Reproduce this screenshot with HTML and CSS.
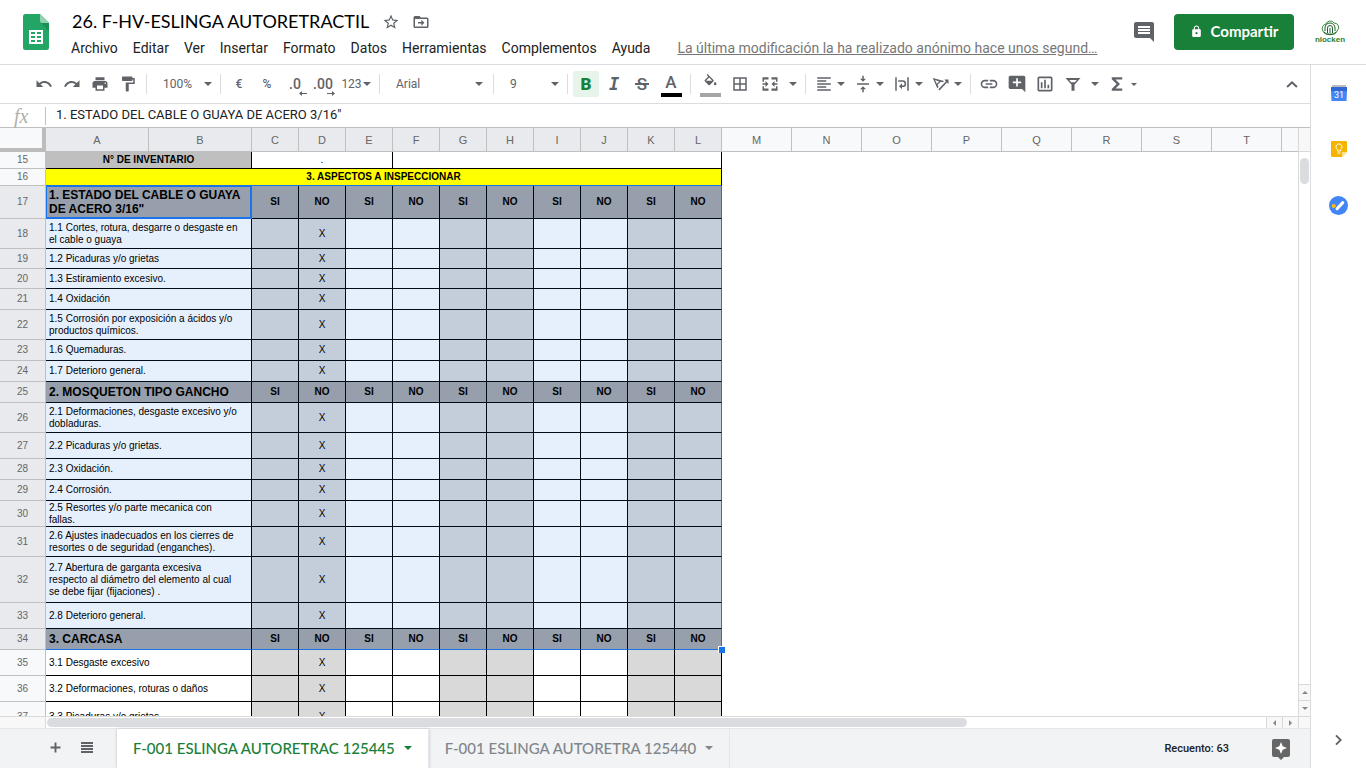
FILE: index.html
```html
<!DOCTYPE html>
<html lang="es">
<head>
<meta charset="utf-8">
<title>26. F-HV-ESLINGA AUTORETRACTIL</title>
<link rel="stylesheet" href="styles.css">
</head>
<body>
<header class="top">
  <svg class="logo" viewBox="0 0 26 36" aria-hidden="true">
    <path fill="#23a566" d="M2 0h15l9 9v24.500a2.500 2.500 0 0 1-2.500 2.500h-21A2.500 2.500 0 0 1 0 33.500v-31A2.500 2.500 0 0 1 2 0z"/>
    <path fill="#1c8f55" d="M18 9h8v8z"/>
    <path fill="#8ed1b1" d="M17 0l9 9h-7a2 2 0 0 1-2-2z"/>
    <path fill="#fff" fill-rule="evenodd" d="M6 16h14v14H6zM8 18v2h4v-2zM14 18v2h4v-2zM8 22v2h4v-2zM14 22v2h4v-2zM8 26v2h4v-2zM14 26v2h4v-2z"/>
  </svg>
  <div class="heading">
    <div class="title-row">
      <input class="title" type="text" aria-label="Nombre del documento" value="26. F-HV-ESLINGA AUTORETRACTIL">
      <button class="mini" aria-label="Destacar"><svg viewBox="0 0 24 24"><path d="M22 9.240l-7.190-.62L12 2 9.190 8.630 2 9.240l5.460 4.730L5.820 21 12 17.270 18.180 21l-1.630-7.030L22 9.240zM12 15.400l-3.760 2.270 1-4.280-3.320-2.880 4.380-.38L12 6.100l1.710 4.040 4.380.38-3.320 2.880 1 4.280L12 15.400z"/></svg></button>
      <button class="mini" aria-label="Mover"><svg viewBox="0 0 24 24"><path d="M20 6h-8l-2-2H4a2 2 0 0 0-2 2v12a2 2 0 0 0 2 2h16a2 2 0 0 0 2-2V8a2 2 0 0 0-2-2zm0 12H4V8h16zM12.500 17l4-4-4-4v3H8v2h4.500z"/></svg></button>
    </div>
    <nav class="menu">
      <button>Archivo</button><button>Editar</button><button>Ver</button><button>Insertar</button><button>Formato</button><button>Datos</button><button>Herramientas</button><button>Complementos</button><button>Ayuda</button>
      <a class="last-edit" href="#">La última modificación la ha realizado anónimo hace unos segund…</a>
    </nav>
  </div>
  <div class="account">
    <button class="comments" aria-label="Comentarios"><svg viewBox="0 0 24 24"><path d="M22 4c0-1.100-.9-2-2-2H4c-1.100 0-2 .9-2 2v12c0 1.100.9 2 2 2h14l4 4zM18 14H6v-2h12v2zm0-3H6V9h12v2zm0-3H6V6h12v2z"/></svg></button>
    <button class="share"><svg viewBox="0 0 24 24" aria-hidden="true"><path d="M18 8h-1V6c0-2.760-2.240-5-5-5S7 3.240 7 6v2H6c-1.100 0-2 .9-2 2v10c0 1.100.9 2 2 2h12c1.100 0 2-.9 2-2V10c0-1.100-.9-2-2-2zm-6 9a2 2 0 1 1 0-4 2 2 0 0 1 0 4zm3.100-9H8.900V6a3.100 3.100 0 0 1 6.200 0z"/></svg>Compartir</button>
    <svg class="avatar" viewBox="0 0 32 32" role="img" aria-label="Cuenta">
      <g fill="none" stroke="#3c8a3c" stroke-width="1">
        <path d="M12 8a4.500 4.500 0 0 1 8-1 4.500 4.500 0 0 1 3 8 4 4 0 0 1-5 3h-4a4 4 0 0 1-5-3 4.500 4.500 0 0 1 3-7z"/>
        <path stroke="#1f5f2c" d="M13.500 17v-5a2.500 2.500 0 0 1 5 0v5M16 12v5M11 15v-3a5 5 0 0 1 10 0v3M10 16a8 8 0 0 0 12 0"/>
      </g>
      <text x="16" y="26" text-anchor="middle" class="avatar-name">nlocken</text>
    </svg>
  </div>
</header>
<div class="body">
<main class="editor">
  <div class="toolbar">
    <button class="tb" aria-label="Deshacer"><svg viewBox="0 0 24 24"><path d="M12.500 8c-2.650 0-5.050.99-6.900 2.600L2 7v9h9l-3.620-3.620c1.390-1.160 3.160-1.880 5.120-1.880 3.540 0 6.550 2.310 7.600 5.500l2.370-.78C21.080 11.030 17.150 8 12.500 8z"/></svg></button>
    <button class="tb" aria-label="Rehacer"><svg viewBox="0 0 24 24"><path d="M18.400 10.600C16.550 8.990 14.150 8 11.500 8c-4.650 0-8.580 3.030-9.960 7.220L3.900 16c1.050-3.190 4.050-5.500 7.600-5.500 1.950 0 3.730.72 5.120 1.880L13 16h9V7z"/></svg></button>
    <button class="tb" aria-label="Imprimir"><svg viewBox="0 0 24 24"><path d="M19 8H5c-1.660 0-3 1.340-3 3v6h4v4h12v-4h4v-6c0-1.660-1.340-3-3-3zm-3 11H8v-5h8v5zm3-7a1 1 0 1 1 0-2 1 1 0 0 1 0 2zM18 3H6v4h12V3z"/></svg></button>
    <button class="tb" aria-label="Copiar formato"><svg viewBox="0 0 24 24"><path d="M18 4V3c0-.55-.45-1-1-1H5c-.55 0-1 .45-1 1v4c0 .55.45 1 1 1h12c.55 0 1-.45 1-1V6h1v4H9v11c0 .55.45 1 1 1h2c.55 0 1-.45 1-1v-9h8V4z"/></svg></button>
    <span class="sep"></span>
    <label class="pick pick-s"><select aria-label="Zoom"><option>100%</option></select><i class="caret"></i></label>
    <span class="sep"></span>
    <button class="tb num">€</button><button class="tb num">%</button>
    <button class="tb dec">.0<svg viewBox="0 0 8 5" aria-hidden="true"><path d="M0 2.500L3 0v2h5v1H3v2z"/></svg></button>
    <button class="tb dec">.00<svg viewBox="0 0 8 5" aria-hidden="true"><path d="M8 2.500L5 0v2H0v1h5v2z"/></svg></button>
    <button class="tb fmt">123<i class="caret"></i></button>
    <span class="sep"></span>
    <label class="pick pick-l"><select aria-label="Fuente"><option>Arial</option></select><i class="caret"></i></label>
    <span class="sep"></span>
    <label class="pick pick-s"><select aria-label="Tamaño de fuente"><option>9</option></select><i class="caret"></i></label>
    <span class="sep"></span>
    <button class="tb bold on">B</button>
    <button class="tb italic">I</button>
    <button class="tb strike">S</button>
    <button class="tb wide color"><span>A</span></button>
    <span class="sep"></span>
    <button class="tb wide fill" aria-label="Color de relleno"><svg viewBox="0 0 24 24"><path d="M16.560 8.940L7.620 0 6.210 1.410l2.380 2.380-5.150 5.150c-.59.59-.59 1.540 0 2.120l5.500 5.500c.29.29.68.44 1.060.44s.77-.15 1.060-.44l5.500-5.500c.59-.58.59-1.530 0-2.120zM5.210 10L10 5.210 14.790 10zM19 11.500s-2 2.170-2 3.500a2 2 0 0 0 4 0c0-1.330-2-3.500-2-3.500z"/></svg></button>
    <button class="tb wide" aria-label="Bordes"><svg viewBox="0 0 24 24"><path d="M3 3v18h18V3H3zm8 16H5v-6h6v6zm0-8H5V5h6v6zm8 8h-6v-6h6v6zm0-8h-6V5h6v6z"/></svg></button>
    <button class="tb wide" aria-label="Combinar celdas"><svg viewBox="0 0 24 24"><path d="M2 3h8v3H4v3H2zM14 3h8v6h-2V6h-6zM2 15h2v3h6v3H2zM20 15h2v6h-8v-3h6zM2 11h4V8l4 4-4 4v-3H2zM22 11h-4V8l-4 4 4 4v-3h4z"/></svg></button>
    <button class="drop" aria-label="Opciones de combinar"><i class="caret"></i></button>
    <span class="sep"></span>
    <button class="tb combo" aria-label="Alineación horizontal"><svg viewBox="0 0 24 24"><path d="M15 15H3v2h12v-2zm0-8H3v2h12V7zM3 13h18v-2H3v2zm0 8h18v-2H3v2zM3 3v2h18V3H3z"/></svg><i class="caret"></i></button>
    <button class="tb combo" aria-label="Alineación vertical"><svg viewBox="0 0 24 24"><path d="M8 19h3v4h2v-4h3l-4-4-4 4zm8-14h-3V1h-2v4H8l4 4 4-4zM4 11v2h16v-2H4z"/></svg><i class="caret"></i></button>
    <button class="tb combo" aria-label="Ajuste de texto"><svg viewBox="0 0 24 24"><path d="M3 3h2v18H3zM19 3h2v18h-2zM7 7h6a4.500 4.500 0 0 1 0 9h-1v3l-4-4 4-4v3h1a2.500 2.500 0 0 0 0-5H7z"/></svg><i class="caret"></i></button>
    <button class="tb combo" aria-label="Rotación de texto"><svg viewBox="0 0 24 24"><path d="M1 4l15 4-1.500 1.700-3-.8-4 4 1.300 3L7 17.500zM4 6.500l2.500 5 3-3zM22 6v6l-2-2L10 20.500 8.500 19 18.500 8.500 16.500 6z"/></svg><i class="caret"></i></button>
    <span class="sep"></span>
    <button class="tb" aria-label="Insertar enlace"><svg class="big" viewBox="0 0 24 24"><path d="M3.900 12c0-1.710 1.390-3.100 3.100-3.100h4V7H7a5 5 0 0 0 0 10h4v-1.900H7A3.100 3.100 0 0 1 3.900 12zM8 13h8v-2H8v2zm9-6h-4v1.900h4a3.100 3.100 0 0 1 0 6.200h-4V17h4a5 5 0 0 0 0-10z"/></svg></button>
    <button class="tb" aria-label="Insertar comentario"><svg class="big" viewBox="0 0 24 24"><path d="M22 4c0-1.100-.9-2-2-2H4c-1.100 0-2 .9-2 2v12c0 1.100.9 2 2 2h14l4 4V4zm-5 7h-4v4h-2v-4H7V9h4V5h2v4h4v2z"/></svg></button>
    <button class="tb" aria-label="Insertar gráfico"><svg class="big" viewBox="0 0 24 24"><path d="M9 17H7v-7h2v7zm4 0h-2V7h2v10zm4 0h-2v-4h2v4zm2 2H5V5h14v14zm0-16H5c-1.100 0-2 .9-2 2v14c0 1.100.9 2 2 2h14c1.100 0 2-.9 2-2V5c0-1.100-.9-2-2-2z"/></svg></button>
    <button class="tb" aria-label="Crear un filtro"><svg viewBox="0 0 24 24"><path fill-rule="evenodd" d="M2 4h20l-8 9v8h-4v-8zM7 6.500l2.500 3h5l2.500-3z"/></svg></button>
    <button class="drop" aria-label="Opciones de filtro"><i class="caret"></i></button>
    <button class="tb" aria-label="Funciones"><svg viewBox="0 0 24 24"><path d="M19 3H5v2.500l6.500 6.500L5 18.500V21h14v-3h-9l6-6-6-6h9z"/></svg></button>
    <i class="caret small"></i>
    <button class="tb collapse" aria-label="Ocultar menús"><svg viewBox="0 0 24 24"><path d="M12 8l-7.500 7 1.800 2L12 11.500 17.700 17l1.800-2z"/></svg></button>
  </div>
  <div class="formula">
    <label class="fx" for="fx">fx</label>
    <input id="fx" type="text" value="1. ESTADO DEL CABLE O GUAYA DE ACERO 3/16&quot;">
  </div>
  <div class="sheet">
    <div class="grid">
      <table>
        <colgroup><col class="c-head"><col class="c-ab"><col class="c-ab"><col class="c-s"><col class="c-s"><col class="c-s"><col class="c-s"><col class="c-s"><col class="c-s"><col class="c-s"><col class="c-s"><col class="c-s"><col class="c-s"><col class="c-m"><col class="c-m"><col class="c-m"><col class="c-m"><col class="c-m"><col class="c-m"><col class="c-m"><col class="c-m"><col></colgroup>
        <thead><tr><th class="corner"><th class="s">A<th class="s">B<th class="s">C<th class="s">D<th class="s">E<th class="s">F<th class="s">G<th class="s">H<th class="s">I<th class="s">J<th class="s">K<th class="s">L<th>M<th>N<th>O<th>P<th>Q<th>R<th>S<th>T<th class="rest"></tr></thead>
        <tbody>
          <tr class="h17"><th>15<td class="inv" colspan="2">N° DE INVENTARIO<td class="mid" colspan="3">.<td colspan="7"></tr>
          <tr class="h17"><th>16<td class="band" colspan="12">3. ASPECTOS A INSPECCIONAR</tr>
        </tbody>
        <tbody class="sel">
          <tr class="h33 sec"><th>17<td class="active" colspan="2">1. ESTADO DEL CABLE O GUAYA DE ACERO 3/16"<td>SI<td>NO<td>SI<td>NO<td>SI<td>NO<td>SI<td>NO<td>SI<td>NO</tr>
          <tr class="h30 item"><th>18<td colspan="2">1.1 Cortes, rotura, desgarre o desgaste en<br>el cable o guaya<td><td>X<td><td><td><td><td><td><td><td></tr>
          <tr class="h20 item"><th>19<td colspan="2">1.2 Picaduras y/o grietas<td><td>X<td><td><td><td><td><td><td><td></tr>
          <tr class="h20 item"><th>20<td colspan="2">1.3 Estiramiento excesivo.<td><td>X<td><td><td><td><td><td><td><td></tr>
          <tr class="h21 item"><th>21<td colspan="2">1.4 Oxidación<td><td>X<td><td><td><td><td><td><td><td></tr>
          <tr class="h30 item"><th>22<td colspan="2">1.5 Corrosión por exposición a ácidos y/o productos químicos.<td><td>X<td><td><td><td><td><td><td><td></tr>
          <tr class="h21 item"><th>23<td colspan="2">1.6 Quemaduras.<td><td>X<td><td><td><td><td><td><td><td></tr>
          <tr class="h21 item"><th>24<td colspan="2">1.7 Deterioro general.<td><td>X<td><td><td><td><td><td><td><td></tr>
          <tr class="h21 sec"><th>25<td colspan="2">2. MOSQUETON TIPO GANCHO<td>SI<td>NO<td>SI<td>NO<td>SI<td>NO<td>SI<td>NO<td>SI<td>NO</tr>
          <tr class="h30 item"><th>26<td colspan="2">2.1 Deformaciones, desgaste excesivo y/o dobladuras.<td><td>X<td><td><td><td><td><td><td><td></tr>
          <tr class="h26 item"><th>27<td colspan="2">2.2 Picaduras y/o grietas.<td><td>X<td><td><td><td><td><td><td><td></tr>
          <tr class="h21 item"><th>28<td colspan="2">2.3 Oxidación.<td><td>X<td><td><td><td><td><td><td><td></tr>
          <tr class="h21 item"><th>29<td colspan="2">2.4 Corrosión.<td><td>X<td><td><td><td><td><td><td><td></tr>
          <tr class="h26 item"><th>30<td colspan="2">2.5 Resortes y/o parte mecanica con<br>fallas.<td><td>X<td><td><td><td><td><td><td><td></tr>
          <tr class="h30 item"><th>31<td colspan="2">2.6 Ajustes inadecuados en los cierres de resortes o de seguridad (enganches).<td><td>X<td><td><td><td><td><td><td><td></tr>
          <tr class="h46 item"><th>32<td colspan="2">2.7 Abertura de garganta excesiva<br>respecto al diámetro del elemento al cual<br>se debe fijar (fijaciones) .<td><td>X<td><td><td><td><td><td><td><td></tr>
          <tr class="h26 item"><th>33<td colspan="2">2.8 Deterioro general.<td><td>X<td><td><td><td><td><td><td><td></tr>
          <tr class="h21 sec"><th>34<td colspan="2">3. CARCASA<td>SI<td>NO<td>SI<td>NO<td>SI<td>NO<td>SI<td>NO<td>SI<td class="end">NO<span class="handle"></span></tr>
        </tbody>
        <tbody class="plain">
          <tr class="h26 item"><th>35<td colspan="2">3.1 Desgaste excesivo<td><td>X<td><td><td><td><td><td><td><td></tr>
          <tr class="h26 item"><th>36<td colspan="2">3.2 Deformaciones, roturas o daños<td><td>X<td><td><td><td><td><td><td><td></tr>
          <tr class="h30 item"><th>37<td colspan="2">3.3 Picaduras y/o grietas<td><td>X<td><td><td><td><td><td><td><td></tr>
        </tbody>
      </table>
    </div>
    <div class="vbar">
      <div class="vtop"></div>
      <div class="vtrack"><div class="vthumb"></div></div>
      <button class="arrow up" aria-label="Subir"></button>
      <button class="arrow down" aria-label="Bajar"></button>
    </div>
    <div class="hbar">
      <div class="hleft"></div>
      <div class="htrack"><div class="hthumb"></div></div>
      <button class="arrow left" aria-label="Izquierda"></button>
      <button class="arrow right" aria-label="Derecha"></button>
    </div>
    <div class="hcorner"></div>
  </div>
  <footer class="tabs">
    <button class="ico" aria-label="Añadir hoja"><svg viewBox="0 0 24 24"><path d="M20 13.500h-6.500V20h-3v-6.500H4v-3h6.500V4h3v6.500H20z"/></svg></button>
    <button class="ico" aria-label="Todas las hojas"><svg viewBox="0 0 12 12"><path d="M0 0h12v2H0zM0 3h12v2H0zM0 6h12v2H0zM0 9h12v2H0z"/></svg></button>
    <button class="tab current">F-001 ESLINGA AUTORETRAC 125445<i class="caret"></i></button>
    <button class="tab">F-001 ESLINGA AUTORETRA 125440<i class="caret"></i></button>
    <button class="count">Recuento: 63</button>
    <button class="explore" aria-label="Explorar"><svg viewBox="0 0 18 21"><path fill="#666" d="M2 0h14a2 2 0 0 1 2 2v14a2 2 0 0 1-2 2h-4l-3 3-3-3H2a2 2 0 0 1-2-2V2a2 2 0 0 1 2-2z"/><path fill="#fff" d="M9 3l1.700 4.300L15 9l-4.300 1.700L9 15l-1.700-4.300L3 9l4.300-1.700z"/></svg></button>
  </footer>
</main>
<aside class="rail">
  <button aria-label="Calendar"><svg viewBox="0 0 16 16"><path fill="#bdbdbd" d="M1 0h14v4H1z"/><path fill="#3367d6" d="M0 2h16v5H0z"/><path fill="#4285f4" d="M0 6h16l-.5 10H.5z"/><text x="8" y="13" text-anchor="middle" class="cal">31</text></svg></button>
  <button aria-label="Keep"><svg viewBox="0 0 16 16"><path fill="#f5b400" d="M1 0h14a1 1 0 0 1 1 1v10l-5 5H1a1 1 0 0 1-1-1V1a1 1 0 0 1 1-1z"/><path fill="#fde293" d="M16 11l-5 5v-4a1 1 0 0 1 1-1z"/><path fill="none" stroke="#fff" d="M6.500 10V8.500a3 3 0 1 1 3 0V10zM6.500 12h3"/></svg></button>
  <button aria-label="Tasks"><svg class="round" viewBox="0 0 20 20"><circle cx="10" cy="10" r="10" fill="#4285f4"/><circle cx="5" cy="10.500" r="2.200" fill="#fbbc04"/><path stroke="#fff" stroke-width="3.200" stroke-linecap="round" d="M8.500 13.500l6-6.500"/></svg></button>
  <button class="hide" aria-label="Ocultar panel lateral"><svg viewBox="0 0 24 24"><path fill="#5f6368" d="M8.500 4L6.500 6l6 6-6 6 2 2 8-8z"/></svg></button>
</aside>
</div>
</body>
</html>
```
FILE: styles.css
```css
* { box-sizing: border-box; }
html, body { height: 100%; }
body {
  margin: 0;
  display: flex;
  flex-direction: column;
  overflow: hidden;
  background: #fff;
  color: #202124;
  font-family: Roboto, "Liberation Sans", sans-serif;
  font-size: 14px;
}
button, input, select {
  margin: 0;
  padding: 0;
  border: 0;
  background: none;
  font: inherit;
  color: inherit;
  appearance: none;
  outline: 0;
}
svg { display: block; fill: #5f6368; }

/* Header */
.top {
  display: flex;
  flex: none;
  height: 65px;
  border-bottom: 1px solid #dadce0;
}
.logo { flex: none; width: 26px; height: 36px; margin: 14px 15px 0 23px; }
.heading { flex: 1; min-width: 0; }
.title-row { display: flex; align-items: center; height: 28px; margin-top: 8px; }
.title {
  width: 302px;
  height: 26px;
  margin: 0 8px 2px;
  color: #000;
  font-family: Lato, "Open Sans", sans-serif;
  font-size: 18px;
}
.mini { width: 18px; height: 18px; margin-right: 12px; }
.menu { display: flex; align-items: center; height: 24px; white-space: nowrap; }
.menu button { padding: 0 8px 0 7px; font-size: 14px; }
.last-edit { margin-left: 19px; color: #777; }
.account { display: flex; align-items: flex-start; flex: none; }
.comments { margin: 20px 18px 0 0; }
.comments svg { width: 24px; height: 24px; }
.share {
  display: flex;
  align-items: center;
  justify-content: center;
  gap: 8px;
  width: 120px;
  height: 36px;
  margin-top: 14px;
  padding-bottom: 2px;
  border-radius: 4px;
  background: #188038;
  color: #fff;
  font-family: Lato, "Open Sans", sans-serif;
  font-size: 15px;
  font-weight: 700;
}
.share svg { width: 13px; height: 13px; fill: #fff; }
.avatar { width: 32px; height: 32px; margin: 16px 20px 0; }
.avatar-name { fill: #2f7d36; font: 700 8px "Liberation Sans", sans-serif; }

.body { display: flex; flex: 1; min-height: 0; }
.editor { display: flex; flex-direction: column; flex: 1; min-width: 0; }

/* Toolbar */
.toolbar {
  display: flex;
  align-items: center;
  flex: none;
  height: 39px;
  padding: 0 4px 0 30px;
  border-bottom: 1px solid #dadce0;
  color: #5f6368;
  font-size: 12px;
}
.tb {
  display: flex;
  align-items: center;
  justify-content: center;
  flex: none;
  width: 28px;
  height: 26px;
}
.tb svg { width: 18px; height: 18px; flex: none; }
.tb svg.big { width: 20px; height: 20px; }
.wide { width: 30px; }
.sep { flex: none; width: 1px; height: 20px; margin: 0 4px; background: #dadce0; }
.caret {
  flex: none;
  border: 4px solid transparent;
  border-top-color: currentColor;
  border-bottom: 0;
}
.caret.small { border-width: 3px 3px 0; }
.pick { display: flex; align-items: center; flex: none; padding: 0 4px 0 12px; }
.pick select { flex: 1; min-width: 0; }
.pick-s { width: 65px; }
.pick-l { width: 105px; padding-right: 6px; }
.num { font-weight: 500; }
.dec { position: relative; font-size: 14px; font-weight: 500; }
.tb.dec svg { position: absolute; right: 2px; bottom: 1px; width: 8px; height: 5px; }
.fmt { width: 38px; gap: 1px; font-size: 12px; }
.bold, .italic, .strike { font-size: 17px; font-weight: 900; }
.bold.on { width: 26px; margin: 0 1px; border-radius: 2px; background: #e6f4ea; color: #188038; }
.italic { font-family: "DejaVu Sans Mono", monospace; font-style: italic; font-weight: 700; }
.strike { position: relative; font-weight: 500; }
.strike::after {
  content: "";
  position: absolute;
  top: 12px;
  left: 7px;
  width: 14px;
  height: 2px;
  background: #5f6368;
}
.color span { width: 21px; height: 26px; border-bottom: 4px solid #000; font-size: 17px; font-weight: 500; line-height: 22px; }
.tb.fill svg { width: 21px; height: 26px; padding: 3px 2px; border-bottom: 4px solid #a6a6a6; }
.drop { display: flex; justify-content: center; flex: none; width: 16px; padding: 8px 0; }
.combo { width: 39px; gap: 4px; }
.collapse { margin-left: auto; }

/* Formula bar */
.formula {
  display: flex;
  align-items: center;
  flex: none;
  height: 24px;
  border-bottom: 1px solid #c0c0c0;
}
.fx {
  width: 46px;
  padding-left: 14px;
  border-right: 1px solid #c0c0c0;
  color: #b0b0b0;
  font: italic 20px/18px "Liberation Serif", serif;
}
.formula input { flex: 1; height: 21px; margin-bottom: 2px; padding-left: 10px; color: #202124; font-size: 13px; }

/* Sheet */
.sheet {
  display: grid;
  grid-template-columns: 1fr 12px;
  grid-template-rows: 1fr 12px;
  flex: 1;
  min-height: 0;
}
.grid { min-width: 0; overflow: hidden; }
table {
  width: 100%;
  border-collapse: separate;
  border-spacing: 0;
  table-layout: fixed;
  color: #000;
  font: 10px/12px "Liberation Sans", Arial, sans-serif;
}
.c-head { width: 46px; }
.c-ab { width: 103px; }
.c-s { width: 47px; }
.c-m { width: 70px; }
th, td { padding: 0; border: solid #000; border-width: 0 1px 1px 0; text-align: center; vertical-align: middle; }
th {
  border-color: #c0c0c0;
  background: #f8f9fa;
  color: #666;
  font-weight: 400;
}
thead th { height: 24px; font-size: 11px; }
.s, .sel th { background: #e8eaed; }
.corner { border-width: 0 4px 4px 0; border-color: #bcbcbc; }
.rest { border-right: 0; }
.h17 { height: 17px; }
.h20 { height: 20px; }
.h21 { height: 21px; }
.h26 { height: 26px; }
.h30 { height: 30px; }
.h33 { height: 33px; }
.h46 { height: 46px; }
.inv { background: #bfbfbf; font-weight: 700; }
.band { border-bottom-color: #1a73e8; background: #ff0; font-weight: 700; }
.item td:nth-child(2), .sec td:nth-child(2) { padding-left: 3px; text-align: left; }
.sel td { border-color: #010a18; background: #e6f0fd; }
.sel td:last-child { border-right-color: #1a73e8; }
.sel tr:last-child td { border-bottom-color: #1a73e8; }
.sel td:nth-child(4n+3), .sel td:nth-child(4n) { background: #c4cdda; }
.plain td:nth-child(4n+3), .plain td:nth-child(4n) { background: #d9d9d9; }
.sel .sec td { background: #969fab; font-weight: 700; }
.sec td:nth-child(2) { font-size: 12px; line-height: 14px; }
.active { box-shadow: inset 1px 1px #1a73e8, inset -1px -1px #1a73e8; }
.sel .active { border-color: #1a73e8; }
.end { position: relative; }
.handle {
  position: absolute;
  right: -4px;
  bottom: -4px;
  width: 7px;
  height: 7px;
  border: solid #fff;
  border-width: 1px 0 0 1px;
  background: #1a73e8;
}

/* Scroll bars */
.vbar { display: flex; flex-direction: column; border-left: 1px solid #d9d9d9; }
.vtop { height: 24px; border-bottom: 1px solid #d9d9d9; background: #f8f8f8; }
.vtrack { flex: 1; padding: 6px 1px; }
.vthumb { height: 26px; border-radius: 5px; background: #dadce0; }
.hbar { display: flex; border-top: 1px solid #d9d9d9; }
.hleft { width: 46px; border-right: 1px solid #d9d9d9; background: #f8f8f8; }
.htrack { flex: 1; padding: 1px; }
.hthumb { width: 75.5%; height: 9px; border-radius: 5px; background: #dadce0; }
.arrow { display: grid; place-items: center; flex: none; background: #f8f8f8; border: solid #d9d9d9; }
.vbar .arrow { height: 16px; border-width: 1px 0 0; }
.hbar .arrow { width: 16px; border-width: 0 0 0 1px; }
.arrow::before { content: ""; border: 3px solid transparent; }
.up::before { border-top: 0; border-bottom-color: #888; }
.down::before { border-bottom: 0; border-top-color: #888; }
.left::before { border-left: 0; border-right-color: #888; }
.right::before { border-right: 0; border-left-color: #888; }
.hcorner { border: solid #d9d9d9; border-width: 1px 0 0 1px; background: #f8f8f8; }

/* Sheet tabs */
.tabs {
  display: flex;
  align-items: center;
  flex: none;
  height: 40px;
  padding-left: 40px;
  border-top: 1px solid #e4e6e9;
  background: #f1f3f4;
}
.ico { display: grid; place-items: center; width: 31px; height: 39px; padding-bottom: 2px; }
.ico svg { width: 15px; height: 15px; }
.ico:nth-child(2) svg { width: 12px; height: 12px; }
.tab {
  display: flex;
  align-items: center;
  gap: 9px;
  height: 39px;
  padding: 0 16px 2px;
  border-right: 1px solid #e4e6e9;
  color: #80868b;
  font-family: Lato, "Open Sans", sans-serif;
  font-size: 15px;
  font-weight: 500;
  white-space: nowrap;
}
.current { margin-left: 15px; background: #fff; color: #188038; box-shadow: 0 0 3px #bdc1c6; }
.count { margin-left: auto; font-size: 11px; font-weight: 500; }
.explore { margin: 2px 20px 0 43px; }
.explore svg { width: 18px; height: 21px; }

/* Side panel */
.rail {
  display: flex;
  flex-direction: column;
  flex: none;
  width: 56px;
  border-left: 1px solid #dadce0;
}
.rail button { display: grid; place-items: center; height: 56px; }
.rail svg { width: 16px; height: 16px; }
.rail svg.round { width: 19px; height: 19px; }
.rail .hide { margin-top: auto; }
.cal { fill: #fff; font: 9px Roboto, sans-serif; }
```
